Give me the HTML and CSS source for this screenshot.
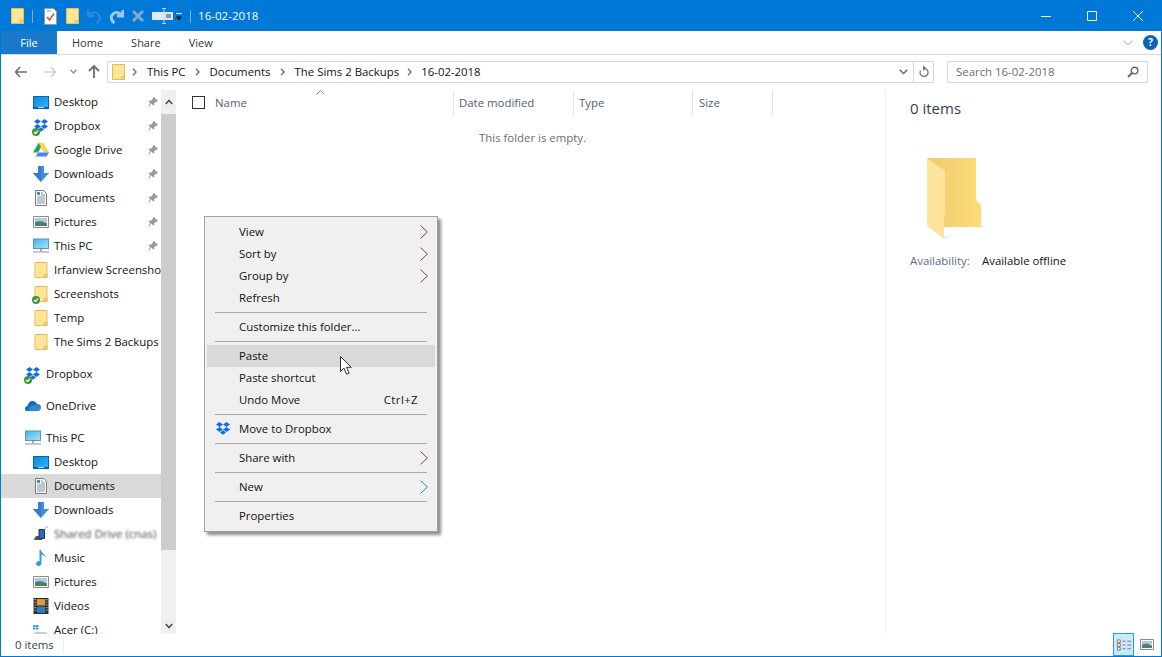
FILE: index.html
```html
<!DOCTYPE html>
<html lang="en">
<head>
<meta charset="utf-8">
<title>16-02-2018</title>
<link rel="stylesheet" href="styles.css">
</head>
<body>
<svg class="defs" aria-hidden="true">
  <defs>
    <linearGradient id="fback" x1="0" x2="1" y1="0" y2="0"><stop offset="0" stop-color="#eecb6c"/><stop offset="1" stop-color="#fddc7c"/></linearGradient>
    <linearGradient id="fdesk" x1="0" x2="1" y1="0" y2="1"><stop offset="0" stop-color="#0a8be4"/><stop offset="1" stop-color="#2db2f5"/></linearGradient>
    <linearGradient id="fpc" x1="0" x2="1" y1="0" y2="1"><stop offset="0" stop-color="#45b4ee"/><stop offset="1" stop-color="#a9e1fb"/></linearGradient>
    <symbol id="folder" viewBox="0 0 13 16">
      <path d="M.5.5h12v15H.5z" fill="#ffe596" stroke="#e2bd5c"/>
      <path d="M9.5 12.5h3v3h-3z" fill="#f6d574" stroke="#e2bd5c"/>
    </symbol>
    <symbol id="desktop" viewBox="0 0 16 13">
      <path d="M0 0h16v13H0z" fill="#0b5fa8"/><path d="M1 1h14v10H1z" fill="url(#fdesk)"/><path d="M5 11.5h6" stroke="#bfe3f8"/>
    </symbol>
    <symbol id="dropbox" viewBox="0 0 16 16">
      <path d="M4.5 1 8 3.4 4.5 6 1 3.4zM11.500 1 15 3.4 11.500 6 8 3.400zM4.500 6 8 8.500 4.500 11 1 8.500zM11.500 6 15 8.500 11.500 11 8 8.500zM8 9.200l3 2.200-3 2.300-3-2.300z" fill="#0f6ee6"/>
    </symbol>
    <symbol id="check" viewBox="0 0 8 8">
      <circle cx="4" cy="4" r="4" fill="#3a9a3a"/><path d="M2 4l1.500 1.500L6 2.600" fill="none" stroke="#fff" stroke-width="1.300"/>
    </symbol>
    <symbol id="gdrive" viewBox="0 0 16 14">
      <path d="M5.500 0h5L5 9.500H0z" fill="#1fa463"/><path d="M10.500 0 16 9.500h-5L5.500 0z" fill="#ffd04b"/><path d="M2.800 13.500 5 9.500h11l-2.500 4z" fill="#4687f4"/>
    </symbol>
    <symbol id="down" viewBox="0 0 16 16">
      <path d="M5 0h6v7h5l-8 9-8-9h5z" fill="#3f8fdc"/><path d="M5 0h3v16L0 7h5z" fill="#2f7fd0"/>
    </symbol>
    <symbol id="doc" viewBox="0 0 12 16">
      <path d="M.5.5h8l3 3v12H.5z" fill="#fff" stroke="#7a7a7a"/>
      <path d="M6 3h2M6 5h4M2 7h8M2 9h8M2 11h8M2 13h8" stroke="#7b8ea8"/><path d="M2 2h3v3H2z" fill="#3c8ad9"/>
    </symbol>
    <symbol id="pic" viewBox="0 0 16 12">
      <path d="M.5.5h15v11H.5z" fill="#fff" stroke="#8a8a8a"/><path d="M2 2h12v4H2z" fill="#a9c8ea"/><path d="M2 6l5-1 7 2v3H2z" fill="#4e7f6e"/>
    </symbol>
    <symbol id="pc" viewBox="0 0 16 15">
      <path d="M0 0h16v10.500H0z" fill="#5d93b5"/><path d="M1 1h14v8.500H1z" fill="url(#fpc)"/><path d="M7 10.500h2V13H7z" fill="#a8a8a8"/><path d="M0 13.500h16" stroke="#a8a8a8" stroke-width="1.200"/>
    </symbol>
    <symbol id="pin" viewBox="0 0 10 10">
      <path d="M6 0l4 4-1 .8-.8-.3-2 2 .2 1.500-1 .8-2-2.200L.7 9.500 0 9l2.400-2.800L.4 4.300l1-.8 1.500.2 2-2-.3-.8z" fill="#9a9a9a"/>
    </symbol>
    <symbol id="onedrive" viewBox="0 0 16 10">
      <path d="M0 8c0-2 1-3 2.500-3C3 2 5 0 7.500 0 9.500 0 11 1 12 3c2.500 0 4 1.500 4 3.500S14.500 10 13 10H2C1 10 0 9.500 0 8z" fill="#0f6cc4"/><path d="M3.500 9.800C3 7 5 5 7.500 4.800 9 4 10.500 3.500 12 4c2.300 0 3.500 1 4 2.800 0 1.800-1.500 3.200-3 3.200z" fill="#fff" opacity=".18"/>
    </symbol>
    <symbol id="phone" viewBox="0 0 16 16">
      <path d="M1 13l2-3h6v4H1z" fill="#555"/><path d="M6 3.500h5.500v9H6z" fill="#1f6fc4" stroke="#333"/><path d="M12 4c0-2.500 1-3.500 3-3" fill="none" stroke="#aaa"/>
    </symbol>
    <symbol id="music" viewBox="0 0 10 16">
      <path d="M3.500 0h1.500c0 3 4.500 3.500 4.500 7.500-1-2-2.500-2.800-4-3V13c0 1.800-1.500 3-3 3S0 15 0 13.500 1.500 11 3.500 11z" fill="#2f9be6"/>
    </symbol>
    <symbol id="video" viewBox="0 0 14 15">
      <path d="M0 0h14v15H0z" fill="#2b2b2b"/><path d="M3 1h8v6H3z" fill="#d9a13a"/><path d="M3 8h8v6H3z" fill="#2e7cc4"/><path d="M1 1.500h1M1 4h1M1 6.500h1M1 9h1M1 11.500h1M12 1.500h1M12 4h1M12 6.500h1M12 9h1M12 11.500h1" stroke="#ddd"/>
    </symbol>
    <symbol id="drive" viewBox="0 0 16 12">
      <path d="M0 1h2.500v2H0zM3 1h2.500v2H3zM0 3.500h2.500v2H0zM3 3.500h2.500v2H3z" fill="#27a5ec"/><path d="M2 8h11l3 3v1H0v-1z" fill="#c9cfd6"/>
    </symbol>
    <symbol id="crumb" viewBox="0 0 5 8">
      <path d="M1 .8 4 4 1 7.200" fill="none" stroke="#777" stroke-width="1.500"/>
    </symbol>
    <symbol id="submenu" viewBox="0 0 8 14">
      <path d="M.6.6 7.400 7 .6 13.400" fill="none" stroke="currentColor"/>
    </symbol>
  </defs>
</svg>

<div class="window">
  <header class="titlebar">
    <svg class="qa qa-folder"><use href="#folder"/></svg>
    <span class="qa-sep"></span>
    <svg class="qa qa-props" viewBox="0 0 13 17"><path d="M.5.500h9l3 3v13H.5z" fill="#fff" stroke="#9a9a9a"/><path d="M3 9l2.500 3L10 5.500" fill="none" stroke="#e0542a" stroke-width="1.500"/><path d="M3 3h4" stroke="#999"/></svg>
    <svg class="qa qa-folder2"><use href="#folder"/></svg>
    <svg class="qa qa-undo" viewBox="0 0 14 15"><path d="M1 1v6h6M1.500 6.500C4 3.500 8 2.500 11 5c2.800 2.500 2.200 6.500-1.500 9" fill="none" stroke="#2a8ad8" stroke-width="2.500"/></svg>
    <svg class="qa qa-redo" viewBox="0 0 14 15"><path d="M13 1v6H7M12.500 6.500C10 3.500 6 2.500 3 5c-2.800 2.500-2.200 6.500 1.500 9" fill="none" stroke="#9fc8e8" stroke-width="3"/></svg>
    <svg class="qa qa-del" viewBox="0 0 14 14"><path d="M2 2l10 10M12 2 2 12" stroke="#7fa9cf" stroke-width="3"/></svg>
    <svg class="qa qa-ren" viewBox="0 0 21 16"><path d="M0 4h21v8H0z" fill="#dde9f5"/><path d="M14 6h5v4h-5z" fill="#6f97ba"/><path d="M12 1v14M10 .5h4M10 15.500h4" stroke="#c3d3e2"/></svg>
    <svg class="qa qa-more" viewBox="0 0 8 9"><path d="M1 .5h6" stroke="#fff"/><path d="M1 3.500h6L4 7.500z" fill="#111"/></svg>
    <span class="qa-sep qa-sep2"></span>
    <span class="title-text">16-02-2018</span>
    <div class="winbtns">
      <svg class="winbtn" viewBox="0 0 46 30"><path d="M18 15.500h10" stroke="#fff"/></svg>
      <svg class="winbtn" viewBox="0 0 46 30"><path d="M18.500 10.500h9v9h-9z" fill="none" stroke="#fff"/></svg>
      <svg class="winbtn" viewBox="0 0 46 30"><path d="M18 10l10 10M28 10 18 20" stroke="#fff" fill="none"/></svg>
    </div>
  </header>

  <nav class="tabs">
    <span class="tab tab-file">File</span>
    <span class="tab tab-home">Home</span>
    <span class="tab tab-share">Share</span>
    <span class="tab tab-view">View</span>
    <svg class="ribbon-caret" viewBox="0 0 10 6"><path d="M.5.500 5 5 9.500.500" fill="none" stroke="#a9a9a9"/></svg>
    <span class="help">?</span>
  </nav>

  <div class="addressrow">
    <svg class="nav-icon nav-back" viewBox="0 0 13 12"><path d="M6 1 1.500 6 6 11M2 6h11" fill="none" stroke="#6f6f6f" stroke-width="1.600"/></svg>
    <svg class="nav-icon nav-fwd" viewBox="0 0 13 12"><path d="M7 1l4.500 5L7 11M11 6H0" fill="none" stroke="#d2d2d2" stroke-width="1.600"/></svg>
    <svg class="nav-icon nav-recent" viewBox="0 0 7 5"><path d="M.5.800 3.500 4 6.500.800" fill="none" stroke="#8f8f8f" stroke-width="1.300"/></svg>
    <svg class="nav-icon nav-up" viewBox="0 0 12 13"><path d="M1 6l5-5 5 5M6 1v12" fill="none" stroke="#6f6f6f" stroke-width="1.800"/></svg>
    <div class="addressbox">
      <svg class="addr-folder"><use href="#folder"/></svg>
      <svg class="crumb crumb-first"><use href="#crumb"/></svg><span class="crumb-text">This PC</span>
      <svg class="crumb"><use href="#crumb"/></svg><span class="crumb-text">Documents</span>
      <svg class="crumb"><use href="#crumb"/></svg><span class="crumb-text">The Sims 2 Backups</span>
      <svg class="crumb crumb-last"><use href="#crumb"/></svg><span class="crumb-text">16-02-2018</span>
      <svg class="addr-drop" viewBox="0 0 9 6"><path d="M.7.800 4.500 4.500 8.300.800" fill="none" stroke="#666" stroke-width="1.500"/></svg>
      <span class="addr-refresh">
        <svg viewBox="0 0 10 13"><path d="M5 3.500a4 4 0 1 1-3.400 2" fill="none" stroke="#7b7b7b" stroke-width="1.400"/><path d="M4 0v6l3-3z" fill="#7b7b7b"/></svg>
      </span>
    </div>
    <div class="searchbox">
      <span>Search 16-02-2018</span>
      <svg viewBox="0 0 12 12"><circle cx="7.500" cy="4.500" r="3.300" fill="none" stroke="#666" stroke-width="1.400"/><path d="M5 7 1 11" stroke="#666" stroke-width="2"/></svg>
    </div>
  </div>

  <div class="main">
    <aside class="nav">
      <div class="nav-row sub"><svg class="ic ic-desk"><use href="#desktop"/></svg><span class="lbl">Desktop</span><svg class="pin"><use href="#pin"/></svg></div>
      <div class="nav-row sub"><span class="ic-wrap"><svg class="ic"><use href="#dropbox"/></svg><svg class="ok"><use href="#check"/></svg></span><span class="lbl">Dropbox</span><svg class="pin"><use href="#pin"/></svg></div>
      <div class="nav-row sub"><svg class="ic ic-gd"><use href="#gdrive"/></svg><span class="lbl">Google Drive</span><svg class="pin"><use href="#pin"/></svg></div>
      <div class="nav-row sub"><svg class="ic"><use href="#down"/></svg><span class="lbl">Downloads</span><svg class="pin"><use href="#pin"/></svg></div>
      <div class="nav-row sub"><svg class="ic"><use href="#doc"/></svg><span class="lbl">Documents</span><svg class="pin"><use href="#pin"/></svg></div>
      <div class="nav-row sub"><svg class="ic ic-pic"><use href="#pic"/></svg><span class="lbl">Pictures</span><svg class="pin"><use href="#pin"/></svg></div>
      <div class="nav-row sub"><svg class="ic"><use href="#pc"/></svg><span class="lbl">This PC</span><svg class="pin"><use href="#pin"/></svg></div>
      <div class="nav-row sub"><svg class="ic"><use href="#folder"/></svg><span class="lbl">Irfanview Screenshots</span></div>
      <div class="nav-row sub"><span class="ic-wrap"><svg class="ic"><use href="#folder"/></svg><svg class="ok"><use href="#check"/></svg></span><span class="lbl">Screenshots</span></div>
      <div class="nav-row sub"><svg class="ic"><use href="#folder"/></svg><span class="lbl">Temp</span></div>
      <div class="nav-row sub group-end"><svg class="ic"><use href="#folder"/></svg><span class="lbl">The Sims 2 Backups</span></div>
      <div class="nav-row group-end"><span class="ic-wrap"><svg class="ic"><use href="#dropbox"/></svg><svg class="ok"><use href="#check"/></svg></span><span class="lbl">Dropbox</span></div>
      <div class="nav-row group-end"><svg class="ic"><use href="#onedrive"/></svg><span class="lbl">OneDrive</span></div>
      <div class="nav-row"><svg class="ic"><use href="#pc"/></svg><span class="lbl">This PC</span></div>
      <div class="nav-row sub"><svg class="ic ic-desk"><use href="#desktop"/></svg><span class="lbl">Desktop</span></div>
      <div class="nav-row sub selected"><svg class="ic"><use href="#doc"/></svg><span class="lbl">Documents</span></div>
      <div class="nav-row sub"><svg class="ic"><use href="#down"/></svg><span class="lbl">Downloads</span></div>
      <div class="nav-row sub"><svg class="ic"><use href="#phone"/></svg><span class="lbl blurred">Shared Drive (cnas)</span></div>
      <div class="nav-row sub"><svg class="ic"><use href="#music"/></svg><span class="lbl">Music</span></div>
      <div class="nav-row sub"><svg class="ic ic-pic"><use href="#pic"/></svg><span class="lbl">Pictures</span></div>
      <div class="nav-row sub"><svg class="ic"><use href="#video"/></svg><span class="lbl">Videos</span></div>
      <div class="nav-row sub"><svg class="ic"><use href="#drive"/></svg><span class="lbl">Acer (C:)</span></div>
    </aside>
    <div class="scrollbar">
      <span class="sb-btn sb-up"><svg viewBox="0 0 8 6"><path d="M.7 5 4 1.500 7.300 5" fill="none" stroke="#505050" stroke-width="1.600"/></svg></span>
      <span class="sb-thumb"></span>
      <span class="sb-btn sb-down"><svg viewBox="0 0 8 6"><path d="M.7 1 4 4.500 7.300 1" fill="none" stroke="#505050" stroke-width="1.600"/></svg></span>
    </div>
    <section class="list">
      <div class="list-head">
        <div class="col col-name"><span class="checkbox"></span><span>Name</span>
          <svg class="sort" viewBox="0 0 9 5"><path d="M.5 4.500 4.500.500l4 4" fill="none" stroke="#8a8a8a"/></svg>
        </div>
        <div class="col col-date">Date modified</div>
        <div class="col col-type">Type</div>
        <div class="col col-size">Size</div>
      </div>
      <p class="empty">This folder is empty.</p>
    </section>
    <aside class="details">
      <h2>0 items</h2>
      <svg class="bigfolder" viewBox="0 0 60 82">
        <path d="M54 68h6l-6 2zM17 79l7-2-7 4z" fill="#e6e6e6"/>
        <path d="M0 0h49v42l5 5v22H17V16z" fill="url(#fback)"/>
        <path d="M0 0l18 13v45l-1 1v22L0 68z" fill="#fde49a"/>
      </svg>
      <div class="avail"><span class="avail-k">Availability:</span><span>Available offline</span></div>
    </aside>
  </div>

  <footer class="status">
    <span class="status-count">0 items</span>
    <div class="views">
      <span class="view view-on"><svg viewBox="0 0 17 14"><path d="M1.500 1.500h3v3h-3zM1.500 5.500h3v3h-3zM1.500 9.500h3v3h-3z" fill="#fff" stroke="#777"/><path d="M7 3h3M12 3h4M7 7h3M12 7h4M7 11h3M12 11h4" stroke="#777"/></svg></span>
      <span class="view"><svg viewBox="0 0 14 11"><path d="M.5.500h13v10H.5z" fill="#fff" stroke="#8a8a8a"/><path d="M2 2h10v3.500H2z" fill="#a9c8ea"/><path d="M2 5.500l5-1 5 2V9H2z" fill="#4e7f6e"/></svg></span>
    </div>
  </footer>

  <div class="menu">
    <div class="mi">View<svg class="arr"><use href="#submenu"/></svg></div>
    <div class="mi">Sort by<svg class="arr"><use href="#submenu"/></svg></div>
    <div class="mi">Group by<svg class="arr"><use href="#submenu"/></svg></div>
    <div class="mi">Refresh</div>
    <hr>
    <div class="mi">Customize this folder...</div>
    <hr>
    <div class="mi mi-on">Paste</div>
    <div class="mi">Paste shortcut</div>
    <div class="mi">Undo Move<span class="shortcut">Ctrl+Z</span></div>
    <hr>
    <div class="mi"><svg class="mi-ic"><use href="#dropbox"/></svg>Move to Dropbox</div>
    <hr>
    <div class="mi">Share with<svg class="arr"><use href="#submenu"/></svg></div>
    <hr>
    <div class="mi">New<svg class="arr arr-blue"><use href="#submenu"/></svg></div>
    <hr>
    <div class="mi">Properties</div>
  </div>

  <svg class="cursor" viewBox="0 0 13 20"><path d="M.5.500v15l3.500-3.300 2.500 6 2.600-1.100-2.500-5.800h4.700z" fill="#fff" stroke="#333"/></svg>
</div>
</body>
</html>
```

FILE: styles.css
```css
* { box-sizing: border-box; }
html, body { margin: 0; padding: 0; }
body {
  width: 1162px;
  height: 657px;
  overflow: hidden;
  font-family: "Open Sans", "Liberation Sans", sans-serif;
  font-size: 11.4px;
  color: #111;
  background: #fff;
}
.defs { position: absolute; width: 0; height: 0; }
svg { display: block; flex: none; }

.window {
  position: relative;
  width: 1162px;
  height: 657px;
  border: 1px solid #0078d7;
  display: flex;
  flex-direction: column;
  overflow: hidden;
}

/* Title bar */
.titlebar {
  height: 30px;
  flex: none;
  background: #0078d7;
  display: flex;
  align-items: center;
  padding-left: 10px;
  color: #fff;
}
.qa-folder, .qa-folder2, .qa-props { width: 13px; height: 16px; }
.qa-sep { width: 1px; height: 13px; background: #6fb3e8; margin: 0 11px 0 8px; }
.qa-sep2 { margin: 0 7px 0 7px; }
.qa-props { height: 17px; }
.qa-folder2 { margin-left: 9px; }
.qa-undo { width: 14px; height: 15px; margin-left: 8px; }
.qa-redo { width: 14px; height: 15px; margin-left: 9px; }
.qa-del { width: 14px; height: 14px; margin-left: 7px; }
.qa-ren { width: 21px; height: 16px; margin-left: 7px; }
.qa-more { width: 8px; height: 9px; margin-left: 2px; margin-top: 3px; }
.title-text { font-size: 11.6px; margin-bottom: 2px; }
.winbtns { margin-left: auto; display: flex; }
.winbtn { width: 46px; height: 30px; }

/* Tabs */
.tabs {
  height: 24px;
  flex: none;
  display: flex;
  align-items: stretch;
  border-bottom: 1px solid #d9d9d9;
  background: #fff;
  color: #333;
  padding-right: 3px;
}
.tab { display: flex; align-items: center; font-size: 11px; }
.tab-file { width: 56px; justify-content: center; background: #1979ca; color: #fff; }
.tab-home { margin-left: 15px; }
.tab-share { margin-left: 28px; }
.tab-view { margin-left: 28px; }
.ribbon-caret { width: 10px; height: 6px; margin: 9px 0 0 auto; }
.help {
  width: 15px;
  height: 15px;
  margin: 4px 0 0 10px;
  border-radius: 50%;
  background: #0c63b8;
  color: #fff;
  font-weight: 700;
  font-size: 10.500px;
  line-height: 15px;
  text-align: center;
}

/* Address row */
.addressrow {
  height: 35px;
  flex: none;
  display: flex;
  align-items: center;
  padding: 0 13px 2px 13px;
  background: #fff;
}
.nav-back { width: 13px; height: 12px; }
.nav-fwd { width: 13px; height: 12px; margin-left: 17px; }
.nav-recent { width: 7px; height: 5px; margin-left: 13px; }
.nav-up { width: 12px; height: 13px; margin-left: 11px; }
.addressbox {
  width: 827px;
  height: 22px;
  margin-left: 7px;
  border: 1px solid #d9d9d9;
  display: flex;
  align-items: center;
  padding-left: 4px;
}
.addr-folder { width: 13px; height: 16px; }
.crumb { width: 5px; height: 8px; margin: 0 10px 0 9px; }
.crumb-first { margin: 0 10px 0 7px; }
.crumb-last { margin: 0 9px 0 8px; }
.addr-drop { width: 9px; height: 6px; margin-left: auto; }
.addr-refresh {
  width: 20px;
  height: 20px;
  margin-left: 5px;
  border-left: 1px solid #d9d9d9;
  display: flex;
  align-items: center;
  justify-content: center;
}
.addr-refresh svg { width: 10px; height: 13px; }
.searchbox {
  width: 201px;
  height: 22px;
  margin-left: auto;
  border: 1px solid #d9d9d9;
  display: flex;
  align-items: center;
  justify-content: space-between;
  padding: 0 8px;
  color: #6d6d6d;
}
.searchbox svg { width: 12px; height: 12px; }

/* Main */
.main { flex: 1; min-height: 0; display: flex; background: #fff; }
.nav { width: 160px; flex: none; overflow: hidden; }
.nav-row {
  position: relative;
  height: 24px;
  display: flex;
  align-items: center;
  padding-left: 24px;
  white-space: nowrap;
  color: #111;
}
.nav-row.sub { padding-left: 32px; }
.lbl { margin-bottom: 2px; }
.group-end { margin-bottom: 8px; }
.selected { background: #d9d9d9; }
.ic {
  width: 16px;
  height: 16px;
  margin-right: 5px;
}
.ic-desk { height: 13px; }
.ic-gd { height: 14px; }
.ic-pic { height: 12px; }
.ic-wrap { position: relative; width: 16px; height: 16px; margin-right: 5px; }
.ok { position: absolute; left: -1px; bottom: -2px; width: 8px; height: 8px; }
.pin { position: absolute; right: 3px; top: 7px; width: 10px; height: 10px; }
.blurred { filter: blur(1.3px); color: #4a3f4a; }

.scrollbar {
  width: 15px;
  flex: none;
  background: #f0f0f0;
  display: flex;
  flex-direction: column;
}
.sb-btn { display: flex; align-items: center; justify-content: center; flex: none; }
.sb-btn svg { width: 8px; height: 6px; }
.sb-up { height: 24px; }
.sb-down { height: 17px; margin-top: auto; }
.sb-thumb { height: 436px; background: #cdcdcd; flex: none; }

.list { flex: 1; min-width: 0; }
.list-head { height: 25px; display: flex; color: #4c607a; }
.col {
  display: flex;
  align-items: center;
  border-right: 1px solid #e5e5e5;
  padding-left: 5px;
  position: relative;
}
.col-name { width: 278px; padding-left: 16px; }
.col-date { width: 120px; }
.col-type { width: 119px; }
.col-size { width: 80px; padding-left: 6px; }
.checkbox {
  width: 13px;
  height: 13px;
  border: 1px solid #333;
  margin-right: 10px;
  background: #fff;
}
.sort { position: absolute; left: 140px; top: 0; width: 9px; height: 5px; }
.empty { margin: 15px 0 0; text-align: center; color: #6d6d6d; padding-left: 4px; line-height: 16px; }

.details {
  width: 276px;
  flex: none;
  border-left: 1px solid #f2f2f2;
  padding-left: 24px;
}
.details h2 {
  margin: 8px 0 0;
  font-weight: 400;
  font-size: 15px;
  line-height: 20px;
  color: #333f50;
}
.bigfolder { width: 60px; height: 82px; margin: 40px 0 0 17px; }
.avail { display: flex; margin-top: 13px; line-height: 16px; }
.avail-k { width: 72px; color: #5a6b85; }

/* Status */
.status {
  height: 22px;
  flex: none;
  display: flex;
  align-items: center;
  padding-left: 14px;
  background: #fff;
  color: #333f50;
  position: relative;
}
.status-count { width: 49px; border-right: 1px solid #f0f0f0; line-height: 16px; }
.views { margin-left: auto; display: flex; align-self: stretch; padding-right: 4px; align-items: stretch; margin-top: -1px; }
.view { width: 21px; display: flex; align-items: center; justify-content: center; margin-left: 2px; }
.view svg { width: 16px; height: 14px; }
.view:last-child svg { width: 14px; height: 11px; }
.view-on { background: #cce8ff; border: 1px solid #26a0da; }

/* Context menu */
.menu {
  position: absolute;
  left: 203px;
  top: 215px;
  width: 234px;
  height: 316px;
  padding: 4px 2px;
  background: #f0f0f0;
  border: 1px solid #a0a0a0;
  box-shadow: 3px 3px 3px rgba(0, 0, 0, .45);
  color: #111;
}
.mi {
  position: relative;
  height: 22px;
  display: flex;
  align-items: center;
  padding: 0 0 2px 32px;
}
.mi-on { background: #d9d9d9; }
.menu hr {
  height: 1px;
  margin: 3px 8px 3px 8px;
  border: 0;
  background: #a9a9a9;
}
.arr { position: absolute; right: 7px; top: 4px; width: 8px; height: 14px; color: #8c3f4d; }
.arr-blue { color: #3f7ea6; }
.shortcut { position: absolute; right: 17px; letter-spacing: .4px; }
.mi-ic { position: absolute; left: 8px; top: 3px; width: 16px; height: 16px; }
.cursor { position: absolute; left: 339px; top: 355px; width: 13px; height: 20px; }
```
